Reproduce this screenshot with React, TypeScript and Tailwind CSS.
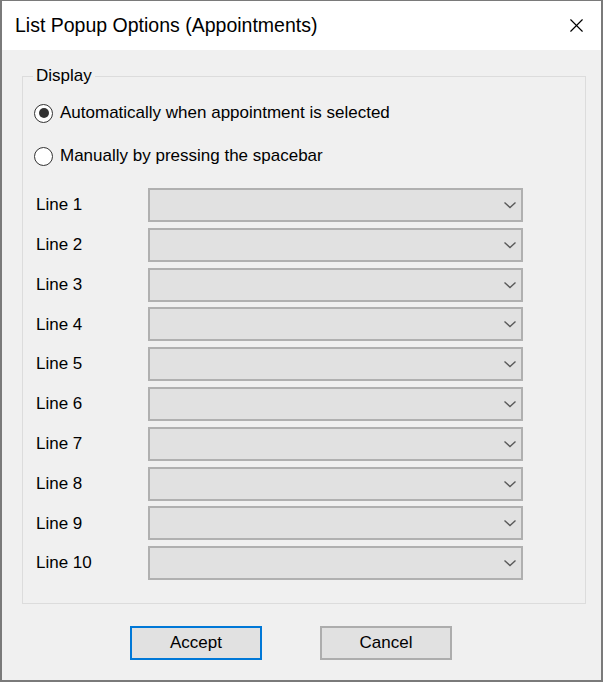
import { X } from 'lucide-react'

const lines = ['Line 1', 'Line 2', 'Line 3', 'Line 4', 'Line 5', 'Line 6', 'Line 7', 'Line 8', 'Line 9', 'Line 10']

function Radio({ checked, label }: { checked?: boolean; label: string }) {
  return (
    <div className="flex h-[24px] items-center">
      <span className="flex h-[19px] w-[19px] items-center justify-center rounded-full border-[1.5px] border-[#333333] bg-white">
        {checked && <span className="h-[10px] w-[10px] rounded-full bg-[#333333]" />}
      </span>
      <span className="ml-[7px] text-[17px] text-black">{label}</span>
    </div>
  )
}

function Combo() {
  return (
    <div className="flex h-[34px] w-[375px] items-center justify-end border-2 border-[#b0b0b0] bg-[#e1e1e1] pr-[4px]">
      <svg width="14" height="8" viewBox="0 0 14 8" fill="none">
        <path d="M1.5 1.5l5.5 5 5.5-5" stroke="#5a5a5a" strokeWidth="1.4" />
      </svg>
    </div>
  )
}

export default function App() {
  return (
    <div
      className="flex h-[682px] w-[603px] flex-col border-x-2 border-b-2 border-t border-[#7a7a7a]"
      style={{ fontFamily: '"Liberation Sans", Arial, sans-serif' }}
    >
      <div className="flex h-[49px] shrink-0 items-center justify-between bg-white pl-[13px] pr-[13px]">
        <span className="text-[19.5px] text-black">List Popup Options (Appointments)</span>
        <X className="h-[23px] w-[23px] text-black" strokeWidth={1.2} />
      </div>

      <div className="flex flex-1 flex-col bg-[#f0f0f0] pl-[20px]">
        <div className="relative mt-[26px] w-[564px] border border-[#dcdcdc] pb-[23px] pl-[11px]">
          <span className="absolute left-[10px] top-[-12px] bg-[#f0f0f0] px-[3px] text-[17px] leading-[22px] text-black">
            Display
          </span>
          <div className="mt-[24px]">
            <Radio checked label="Automatically when appointment is selected" />
          </div>
          <div className="mt-[19px]">
            <Radio label="Manually by pressing the spacebar" />
          </div>
          <div className="mt-[20px] flex flex-col gap-[5.8px]">
            {lines.map((l) => (
              <div key={l} className="flex items-center">
                <span className="w-[114px] pl-[2px] text-[17px] text-black">{l}</span>
                <Combo />
              </div>
            ))}
          </div>
        </div>

        <div className="mt-[22px] flex">
          <button className="ml-[108px] h-[34px] w-[132px] border-2 border-[#0078d7] bg-[#e1e1e1] text-[17px] text-black">
            Accept
          </button>
          <button className="ml-[58px] h-[34px] w-[132px] border-2 border-[#adadad] bg-[#e1e1e1] text-[17px] text-black">
            Cancel
          </button>
        </div>
      </div>
    </div>
  )
}
